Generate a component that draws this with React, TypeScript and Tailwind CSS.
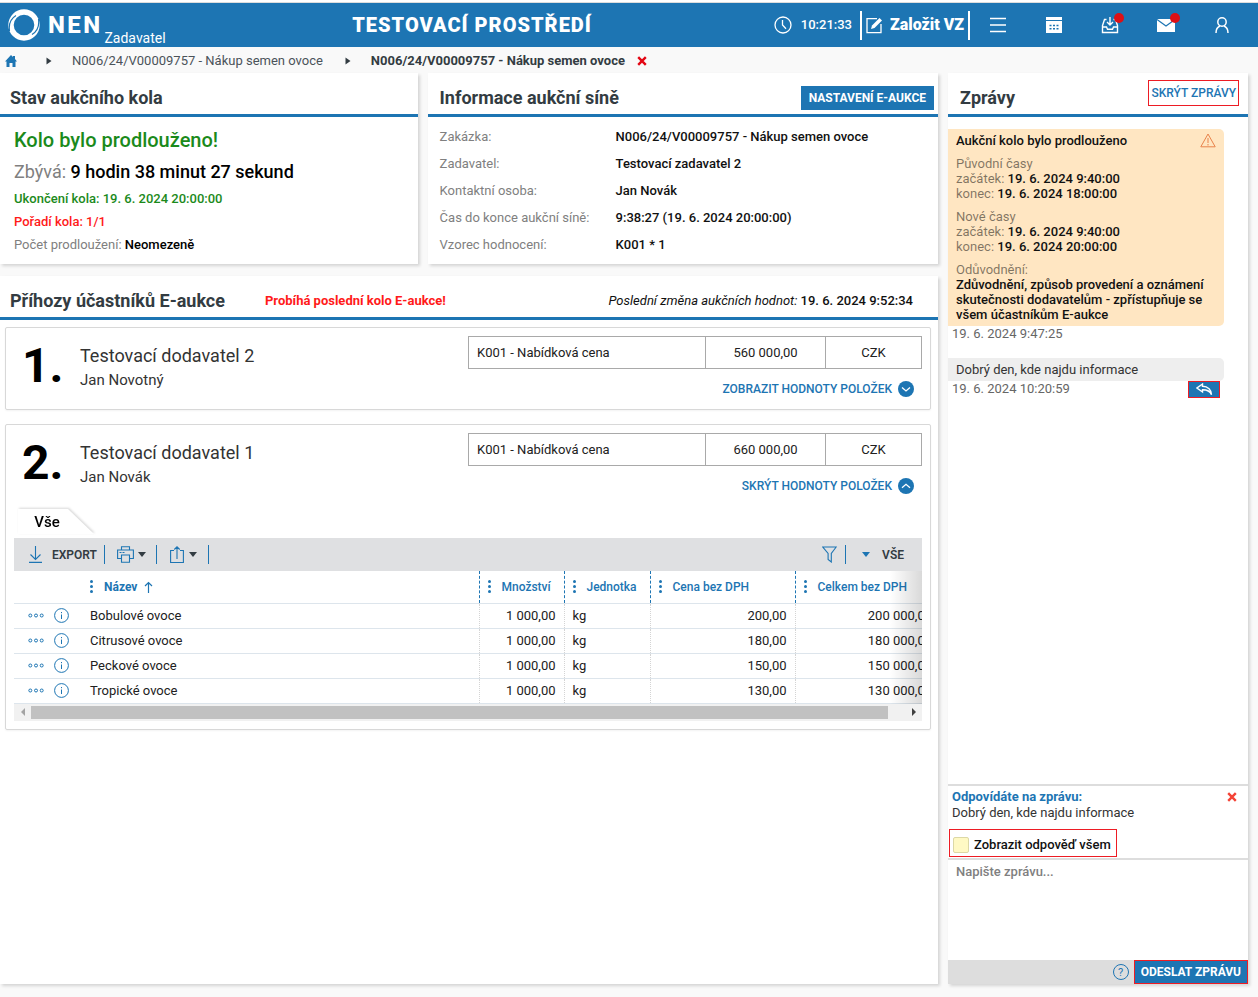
import React, { useState } from 'react';

interface Item {
    name: string;
    amount: string;
    unit: string;
    price: string;
    total: string;
}

interface Bid {
    rank: number;
    supplier: string;
    person: string;
    price: string;
    items: Item[];
}

const items: Item[] = [
    { name: 'Bobulové ovoce', amount: '1 000,00', unit: 'kg', price: '200,00', total: '200 000,00' },
    { name: 'Citrusové ovoce', amount: '1 000,00', unit: 'kg', price: '180,00', total: '180 000,00' },
    { name: 'Peckové ovoce', amount: '1 000,00', unit: 'kg', price: '150,00', total: '150 000,00' },
    { name: 'Tropické ovoce', amount: '1 000,00', unit: 'kg', price: '130,00', total: '130 000,00' },
];

const bids: Bid[] = [
    { rank: 1, supplier: 'Testovací dodavatel 2', person: 'Jan Novotný', price: '560 000,00', items },
    { rank: 2, supplier: 'Testovací dodavatel 1', person: 'Jan Novák', price: '660 000,00', items },
];

const info = [
    { label: 'Zakázka:', value: 'N006/24/V00009757 - Nákup semen ovoce' },
    { label: 'Zadavatel:', value: 'Testovací zadavatel 2' },
    { label: 'Kontaktní osoba:', value: 'Jan Novák' },
    { label: 'Čas do konce aukční síně:', value: '9:38:27 (19. 6. 2024 20:00:00)' },
    { label: 'Vzorec hodnocení:', value: 'K001 * 1' },
];

const CaretRight = () => (
    <svg width="6" height="8" viewBox="0 0 6 8" fill="#333c42"><path d="M0.5 0.5 5.5 4 0.5 7.5z" /></svg>
);

const CaretDown = ({ color }: { color: string }) => (
    <svg width="8" height="5" viewBox="0 0 8 5" fill={color}><path d="M0 0h8L4 5z" /></svg>
);

const CloseIcon = () => (
    <svg width="10" height="10" viewBox="0 0 10 10" stroke="currentColor" strokeWidth="2.4"><path d="M1.2 1.2 8.8 8.8M8.8 1.2 1.2 8.8" /></svg>
);

const DotsVertical = () => (
    <svg width="3" height="13" viewBox="0 0 3 13" fill="#1d75b3" className="shrink-0">
        <circle cx="1.5" cy="1.5" r="1.5" /><circle cx="1.5" cy="6.5" r="1.5" /><circle cx="1.5" cy="11.5" r="1.5" />
    </svg>
);

const Header = () => (
    <header className="flex h-11 items-center bg-[#1d75b3] text-white">
        <div className="flex h-full w-[28%] items-center pl-2">
            <svg width="32" height="32" viewBox="0 0 32 32">
                <circle cx="16" cy="16" r="13" fill="none" stroke="white" strokeWidth="5.400" />
                <path d="M1.500 22C.500 15 3 9.500 8 6.500" fill="none" stroke="#1d75b3" strokeWidth="1.200" />
                <path d="M30.500 10C31.500 17 29 22.500 24 25.500" fill="none" stroke="#1d75b3" strokeWidth="1.200" />
            </svg>
            <span className="ml-2 text-2xl font-extrabold tracking-widest">NEN</span>
            <span className="ml-[2px] self-end text-sm leading-[18px]">Zadavatel</span>
        </div>
        <div className="text-xl font-black tracking-wider">TESTOVACÍ PROSTŘEDÍ</div>
        <div className="flex flex-1 items-center justify-end pr-[27px]">
            <svg width="18" height="18" viewBox="0 0 18 18" fill="none" stroke="white" strokeWidth="1.3">
                <circle cx="9" cy="9" r="8" /><path d="M8.500 4v5l3.500 3.800" />
            </svg>
            <span className="ml-[9px] text-[13px] font-medium">10:21:33</span>
            <button type="button" className="ml-2 flex h-[29px] items-center gap-[7px] border-x-2 border-white px-1 text-base font-black whitespace-nowrap">
                <svg width="17" height="17" viewBox="0 0 17 17" fill="none" stroke="white" strokeWidth="1.3">
                    <path d="M11 1.700H1v14h14V7" /><path d="M5 12l1-3.500L13.500 1 16 3.500 8.500 11z" fill="white" stroke="none" />
                </svg>
                Založit VZ
            </button>
            <div className="ml-[19px] flex items-center gap-[38px]">
                <button type="button" aria-label="Menu">
                    <svg width="18" height="18" viewBox="0 0 18 18" stroke="white" strokeWidth="1.600"><path d="M1 2.500h16M1 9h16M1 15.500h16" /></svg>
                </button>
                <button type="button" aria-label="Kalendář">
                    <svg width="18" height="18" viewBox="0 0 18 18">
                        <path d="M1 1h16v3H1zM1 5h16v12H1z" fill="white" />
                        <path d="M4.500 9.500h2M8 9.500h2M11.500 9.500h2M4.500 12.800h2M8 12.800h2M11.500 12.800h2" stroke="#1d75b3" strokeWidth="1.500" />
                    </svg>
                </button>
                <button type="button" aria-label="Doručené" className="relative">
                    <svg width="18" height="18" viewBox="0 0 18 18" fill="none" stroke="white" strokeWidth="1.400">
                        <path d="M5.500 3.500H3.500L1.500 9.500v7h15v-7l-2-6h-2M1.500 11H5.500l1 2.300h5l1-2.300h4M9 1v8M6 6l3 3 3-3" />
                    </svg>
                    <span className="absolute -top-[3px] -right-[5px] h-[10px] w-[10px] rounded-full bg-[#dd1016]" />
                </button>
                <button type="button" aria-label="Zprávy" className="relative">
                    <svg width="18" height="18" viewBox="0 0 18 18">
                        <path d="M0 3h18v13H0z" fill="white" /><path d="M0 3.500l9 6.500 9-6.500" fill="none" stroke="#1d75b3" strokeWidth="1.200" />
                    </svg>
                    <span className="absolute -top-[3px] -right-[5px] h-[10px] w-[10px] rounded-full bg-[#dd1016]" />
                </button>
                <button type="button" aria-label="Uživatel">
                    <svg width="18" height="18" viewBox="0 0 18 18" fill="none" stroke="white" strokeWidth="1.500">
                        <circle cx="9" cy="6" r="4.200" /><path d="M3 17c0-4 1.500-6 4-7M15 17c0-4-1.500-6-4-7" />
                    </svg>
                </button>
            </div>
        </div>
    </header>
);

const Breadcrumbs = () => (
    <nav className="flex h-[26px] items-center pt-px pl-1 text-[13px] text-[#4b5359]">
        <a href="#" aria-label="Domů" className="pl-px">
            <svg width="12" height="12" viewBox="0 0 12 12" fill="#1d75b3"><path d="M6 0l2 2V1h2v3l2 2.500h-1.500V12H7.500V8h-3v4h-3V6.500H0z" /></svg>
        </a>
        <span className="ml-[29px]"><CaretRight /></span>
        <a href="#" className="ml-5">N006/24/V00009757 - Nákup semen ovoce</a>
        <span className="ml-[22px]"><CaretRight /></span>
        <a href="#" className="ml-5 font-bold text-[#333c42]">N006/24/V00009757 - Nákup semen ovoce</a>
        <button type="button" aria-label="Zavřít" className="ml-3 text-[#e30613]"><CloseIcon /></button>
    </nav>
);

const CardHeader = ({ title, className = 'pl-[10px]', children }: { title: string; className?: string; children?: React.ReactNode }) => (
    <div className={`flex h-11 items-center border-b-3 border-[#1d75b3] pt-2 pr-1 ${className}`}>
        <h2 className="text-lg font-bold text-[#333c42]">{title}</h2>
        {children}
    </div>
);

const ItemsTable = ({ rows }: { rows: Item[] }) => (
    <div className="mx-2">
        <div className="flex h-[29px] drop-shadow-[1px_-1px_1px_rgba(0,0,0,0.15)]">
            <button type="button" className="h-[25px] w-20 bg-white pt-[2px] pr-[14px] text-[15px] font-medium text-black [clip-path:polygon(4px_0,54px_0,100%_100%,4px_100%)]">
                Vše
            </button>
        </div>
        <div className="flex h-[33px] items-center bg-[#dfe0e2] text-xs font-semibold text-[#333c42]">
            <button type="button" className="flex items-center gap-[9px] pl-[14px]">
                <svg width="15" height="17" viewBox="0 0 15 17" fill="none" stroke="#1d75b3" strokeWidth="1.100"><path d="M7.500 0v13M2.500 8.500l5 5 5-5M1 16.400h13" /></svg>
                EXPORT
            </button>
            <span className="mx-[7px] h-[19px] w-px bg-[#1d75b3]" />
            <button type="button" aria-label="Tisk" className="ml-[5px] flex items-center gap-1">
                <svg width="17" height="17" viewBox="0 0 17 17" fill="none" stroke="#1d75b3" strokeWidth="1.100">
                    <path d="M4.500 4V.800h8V4M4.500 12.500H.600V4h15.800v8.500h-3.900M4.500 9h8v7.200h-8zM2.500 6.500h2M5.500 6.500h2" />
                </svg>
                <CaretDown color="#333c42" />
            </button>
            <span className="mx-[10px] h-[19px] w-px bg-[#1d75b3]" />
            <button type="button" aria-label="Sdílet" className="ml-[3px] flex items-center gap-[5px]">
                <svg width="14" height="17" viewBox="0 0 14 17" fill="none" stroke="#1d75b3" strokeWidth="1.100"><path d="M4 4.500H.600v12h12.800v-12H10M7 13V1M4.300 3.500 7 .800l2.700 2.700" /></svg>
                <CaretDown color="#333c42" />
            </button>
            <span className="mx-[11px] h-[19px] w-px bg-[#1d75b3]" />
            <div className="ml-auto flex items-center pr-[18px]">
                <button type="button" aria-label="Filtr">
                    <svg width="15" height="17" viewBox="0 0 15 17" fill="none" stroke="#1d75b3" strokeWidth="1.100"><path d="M.800 1h13.400L9.300 7.500V16l-3.200-2.500v-6z" /></svg>
                </button>
                <span className="mr-4 ml-2 h-[19px] w-px bg-[#1d75b3]" />
                <button type="button" className="flex items-center gap-3"><CaretDown color="#1d75b3" />VŠE</button>
            </div>
        </div>
        <div className="relative overflow-hidden">
            <table className="w-[calc(100%+18px)] table-fixed text-[13px] text-[#212121]">
                <thead>
                    <tr className="h-8 border-b border-[#dde5ec] text-left text-xs text-[#1d75b3]">
                        <th className="w-[76px]" aria-label="Akce" />
                        <th className="font-bold"><span className="flex items-center gap-[11px]"><DotsVertical /><span>Název</span>
                            <svg width="9" height="12" viewBox="0 0 9 12" fill="none" stroke="#1d75b3" strokeWidth="1.200" className="-ml-1"><path d="M4.500 12V1.500M1 5l3.500-3.500L8 5" /></svg>
                        </span></th>
                        <th className="w-[85px] border-l border-dashed border-[#1d75b3] pl-2 font-medium"><span className="flex items-center gap-[11px]"><DotsVertical />Množství</span></th>
                        <th className="w-[86px] border-l border-dashed border-[#1d75b3] pl-2 font-medium"><span className="flex items-center gap-[11px]"><DotsVertical />Jednotka</span></th>
                        <th className="w-[145px] border-l border-dashed border-[#1d75b3] pl-2 font-medium"><span className="flex items-center gap-[11px]"><DotsVertical />Cena bez DPH</span></th>
                        <th className="w-[145px] border-l border-dashed border-[#1d75b3] pl-2 font-medium"><span className="flex items-center gap-[11px]"><DotsVertical />Celkem bez DPH</span></th>
                    </tr>
                </thead>
                <tbody>
                    {rows.map((row) => (
                        <tr key={row.name} className="h-[25px] border-b border-[#dde5ec]">
                            <td>
                                <div className="flex items-center gap-[10px] pl-[14px]">
                                    <button type="button" aria-label="Akce">
                                        <svg width="16" height="5" viewBox="0 0 16 5" fill="none" stroke="#1d75b3"><circle cx="2.300" cy="2.500" r="1.500" /><circle cx="8" cy="2.500" r="1.500" /><circle cx="13.700" cy="2.500" r="1.500" /></svg>
                                    </button>
                                    <button type="button" aria-label="Detail">
                                        <svg width="15" height="15" viewBox="0 0 15 15" fill="none" stroke="#1d75b3"><circle cx="7.500" cy="7.500" r="6.900" /><path d="M7.500 6.500v4.500M7.500 4v1.200" /></svg>
                                    </button>
                                </div>
                            </td>
                            <td>{row.name}</td>
                            <td className="border-l border-dotted border-[#d4d4d4] pr-2 text-right">{row.amount}</td>
                            <td className="border-l border-dotted border-[#d4d4d4] pl-2">{row.unit}</td>
                            <td className="border-l border-dotted border-[#d4d4d4] pr-2 text-right">{row.price}</td>
                            <td className="border-l border-dotted border-[#d4d4d4] pr-2 text-right">{row.total}</td>
                        </tr>
                    ))}
                </tbody>
            </table>
            <div className="absolute inset-y-0 right-0 w-8 bg-linear-to-r from-transparent to-black/15" />
        </div>
        <div className="flex h-[17px] items-center bg-[#f1f1f1]">
            <button type="button" aria-label="Posunout vlevo" className="flex w-[17px] justify-center"><svg width="4" height="8" viewBox="0 0 4 8" fill="#a3a3a3"><path d="M4 0v8L0 4z" /></svg></button>
            <div className="flex-1"><div className="h-[13px] w-[98%] bg-[#c1c1c1]" /></div>
            <button type="button" aria-label="Posunout vpravo" className="flex w-[17px] justify-center"><svg width="4" height="8" viewBox="0 0 4 8" fill="#404040"><path d="M0 0v8l4-4z" /></svg></button>
        </div>
    </div>
);

const BidCard = ({ bid, open, onToggle }: { bid: Bid; open: boolean; onToggle: () => void }) => (
    <article className="rounded-xs border border-[#d8d8d8] pb-2 shadow-xs">
        <div className="flex pt-2 pr-2 pb-1">
            <div className="w-[74px] shrink-0 pl-4 text-5xl leading-[60px] font-bold text-black">{bid.rank}.</div>
            <div className="flex-1 pt-[7px] text-[#333]">
                <h3 className="text-lg leading-[26px]">{bid.supplier}</h3>
                <p className="text-[15px] leading-[22px]">{bid.person}</p>
            </div>
            <div className="w-[454px]">
                <table className="h-[33px] w-full border-collapse text-[13px] text-[#212121]">
                    <tbody>
                        <tr>
                            <td className="border border-[#a9a9a9] px-2">K001 - Nabídková cena</td>
                            <td className="w-[120px] border border-[#a9a9a9] text-center">{bid.price}</td>
                            <td className="w-24 border border-[#a9a9a9] text-center">CZK</td>
                        </tr>
                    </tbody>
                </table>
                <button type="button" aria-expanded={open} onClick={onToggle} className="mt-3 mr-2 ml-auto flex items-center gap-[6px] text-xs font-medium text-[#1d75b3]">
                    {open ? 'SKRÝT HODNOTY POLOŽEK' : 'ZOBRAZIT HODNOTY POLOŽEK'}
                    <svg width="16" height="16" viewBox="0 0 16 16"><circle cx="8" cy="8" r="8" fill="#1d75b3" /><path d={open ? 'M4 9.800 8 6.300l4 3.500' : 'M4 6.500 8 10l4-3.500'} fill="none" stroke="white" strokeWidth="1.300" /></svg>
                </button>
            </div>
        </div>
        {open && <div className="pt-[11px]"><ItemsTable rows={bid.items} /></div>}
    </article>
);

const Time = ({ label, value }: { label: string; value: string }) => (
    <p><span className="font-normal text-black/50">{label}</span> {value}</p>
);

const Messages = () => {
    const [message, setMessage] = useState('');
    const [toAll, setToAll] = useState(false);

    return (
        <aside className="flex w-[300px] shrink-0 flex-col bg-white text-[13px] leading-[15px] shadow-[2px_2px_3px_rgba(0,0,0,0.15)]">
            <div className="flex h-11 items-center justify-between border-b-3 border-[#1d75b3] pr-[9px] pl-3">
                <h2 className="pt-2 text-lg font-bold text-[#333c42]">Zprávy</h2>
                <button type="button" className="mb-px h-[26px] border border-[#ed1c24] px-[2px] text-xs font-medium text-[#1d75b3]">SKRÝT ZPRÁVY</button>
            </div>
            <div className="flex-1 pt-3 pr-6">
                <div className="flex flex-col gap-2 rounded-r-[5px] bg-[#ffe6c2] py-1 pr-2 pl-2 font-medium text-[#111]">
                    <div className="flex h-[15px] items-center justify-between">
                        <h3>Aukční kolo bylo prodlouženo</h3>
                        <svg width="16" height="15" viewBox="0 0 16 15" fill="none" stroke="#e8824a"><path d="M8 1 15.200 13.800H.800zM8 5v5M8 11v1.500" /></svg>
                    </div>
                    <div>
                        <p className="font-normal text-black/50">Původní časy</p>
                        <Time label="začátek:" value="19. 6. 2024 9:40:00" />
                        <Time label="konec:" value="19. 6. 2024 18:00:00" />
                    </div>
                    <div>
                        <p className="font-normal text-black/50">Nové časy</p>
                        <Time label="začátek:" value="19. 6. 2024 9:40:00" />
                        <Time label="konec:" value="19. 6. 2024 20:00:00" />
                    </div>
                    <div>
                        <p className="font-normal text-black/50">Odůvodnění:</p>
                        <p>Zdůvodnění, způsob provedení a oznámení skutečnosti dodavatelům - zpřístupňuje se všem účastníkům E-aukce</p>
                    </div>
                </div>
                <p className="pl-1 text-[#666]">19. 6. 2024 9:47:25</p>
                <div className="mt-[17px] rounded-r-[5px] bg-[#eee] px-2 py-1 text-[#333]">Dobrý den, kde najdu informace</div>
                <div className="flex items-start justify-between pr-1 pl-1 text-[#666]">
                    <span>19. 6. 2024 10:20:59</span>
                    <button type="button" aria-label="Odpovědět" className="flex h-[17px] w-8 items-center justify-center border border-[#ed1c24] bg-[#1d75b3]">
                        <svg width="17" height="13" viewBox="0 0 17 13" fill="none" stroke="white" strokeWidth="1.400"><path d="M6.500 1 1 5l5.500 4V6.800c4 0 7.500 1 9 5C15.500 7 12 3.300 6.500 3.300z" /></svg>
                    </button>
                </div>
            </div>
            <div className="border-t-2 border-[#ddd] pt-[3px] pb-px leading-4">
                <div className="flex items-center justify-between pr-[11px] pl-1">
                    <h3 className="font-bold text-[#1d75b3]">Odpovídáte na zprávu:</h3>
                    <button type="button" aria-label="Zrušit odpověď" className="text-[#f44336]"><CloseIcon /></button>
                </div>
                <p className="pl-1 text-[#333]">Dobrý den, kde najdu informace</p>
                <label className="mt-2 ml-px flex h-7 w-fit items-center gap-[5px] border border-[#ed1c24] pt-1 pr-[5px] pl-[3px] font-medium text-[#111]">
                    <input type="checkbox" checked={toAll} onChange={(e) => setToAll(e.target.checked)} className="h-4 w-4 appearance-none rounded-xs border border-[#dcd8a6] bg-[#fff9c4] checked:bg-[#1d75b3]" />
                    Zobrazit odpověď všem
                </label>
            </div>
            <textarea
                aria-label="Zpráva"
                value={message}
                onChange={(e) => setMessage(e.target.value)}
                placeholder="Napište zprávu..."
                className="block h-[102px] w-full resize-none border-t-2 border-[#ddd] px-2 py-1 font-medium outline-none placeholder:text-[#808080]"
            />
            <div className="flex h-6 items-center justify-end gap-[5px] bg-[#ddd]">
                <button type="button" aria-label="Nápověda" className="flex h-4 w-4 items-center justify-center rounded-full border border-[#1d75b3] text-[11px] leading-none text-[#1d75b3]">?</button>
                <button type="button" className="h-6 border border-[#ed1c24] bg-[#1d75b3] px-[6px] text-xs font-bold text-white">ODESLAT ZPRÁVU</button>
            </div>
        </aside>
    );
};

const App: React.FC = () => {
    const [opened, setOpened] = useState<number | null>(2);

    return (
        <div className="flex min-h-screen flex-col bg-[#f9f9f9] font-[Roboto,sans-serif]">
            <div className="h-[3px] border-b border-[#ddd] bg-white" />
            <Header />
            <Breadcrumbs />
            <div className="flex flex-1 gap-[10px] pr-[10px] pb-[13px]">
                <main className="flex min-w-0 flex-1 flex-col gap-3">
                    <div className="grid grid-cols-[9fr_11fr] gap-[10px]">
                        <section className="bg-white shadow-[2px_2px_3px_rgba(0,0,0,0.15)]">
                            <CardHeader title="Stav aukčního kola" />
                            <div className="px-[14px] py-2 text-[13px] leading-[23px] font-medium text-black">
                                <p className="text-xl leading-[31px] text-[#1b8a1b]">Kolo bylo prodlouženo!</p>
                                <p className="text-lg leading-[31px]"><span className="font-normal text-[#808080]">Zbývá:</span> 9 hodin 38 minut 27 sekund</p>
                                <p className="text-[#1b8a1b]">Ukončení kola: 19. 6. 2024 20:00:00</p>
                                <p className="text-[#ff1a1a]">Pořadí kola: 1/1</p>
                                <p><span className="font-normal text-[#808080]">Počet prodloužení:</span> Neomezeně</p>
                            </div>
                        </section>
                        <section className="bg-white shadow-[2px_2px_3px_rgba(0,0,0,0.15)]">
                            <CardHeader title="Informace aukční síně" className="pl-3">
                                <button type="button" className="ml-auto h-6 bg-[#1d75b3] px-2 text-xs font-bold text-white">NASTAVENÍ E-AUKCE</button>
                            </CardHeader>
                            <dl className="grid grid-cols-[176px_1fr] px-3 py-[6px] text-[13px] leading-[27px]">
                                {info.map((row) => (
                                    <React.Fragment key={row.label}>
                                        <dt className="text-[#808080]">{row.label}</dt>
                                        <dd className="font-medium text-[#111]">{row.value}</dd>
                                    </React.Fragment>
                                ))}
                            </dl>
                        </section>
                    </div>
                    <section className="flex-1 bg-white shadow-[2px_2px_3px_rgba(0,0,0,0.15)]">
                        <CardHeader title="Příhozy účastníků E-aukce">
                            <p className="ml-10 text-[13px] font-bold text-[#ff1a1a]">Probíhá poslední kolo E-aukce!</p>
                            <p className="ml-auto pr-[21px] text-[13px] font-medium text-[#111]"><em className="font-normal">Poslední změna aukčních hodnot:</em> 19. 6. 2024 9:52:34</p>
                        </CardHeader>
                        <div className="flex flex-col gap-[14px] pt-[7px] pr-[7px] pl-[5px]">
                            {bids.map((bid) => (
                                <BidCard key={bid.rank} bid={bid} open={opened === bid.rank} onToggle={() => setOpened(opened === bid.rank ? null : bid.rank)} />
                            ))}
                        </div>
                    </section>
                </main>
                <Messages />
            </div>
        </div>
    );
};

export default App;
